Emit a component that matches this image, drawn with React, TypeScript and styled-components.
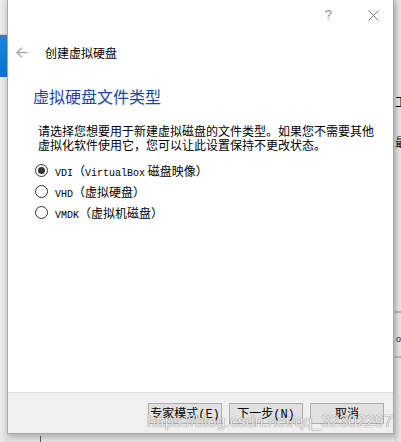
import React from 'react';
import styled, { createGlobalStyle } from 'styled-components';

const GlobalStyle = createGlobalStyle`
  html, body {
    margin: 0;
    padding: 0;
    background: #e4e4e4;
  }
`;

const CJK = `"Noto Sans CJK SC", "Liberation Sans", sans-serif`;
const MIXED = `"Liberation Mono", "Noto Sans CJK SC", monospace`;

const BackIcon = () => (
  <svg width="12" height="11" viewBox="0 0 12 11">
    <path d="M11.5 5.5H1M5.8 0.7L1 5.5l4.8 4.8" fill="none" stroke="#a8a8a8" strokeWidth="1.4" />
  </svg>
);

const CloseIcon = () => (
  <svg width="11" height="11" viewBox="0 0 11 11">
    <path d="M0.5 0.5l10 10M10.5 0.5l-10 10" fill="none" stroke="#7a7a7a" strokeWidth="1" />
  </svg>
);

type RadioOption = {
  code: string;
  note: string;
  checked?: boolean;
};

const options: RadioOption[] = [
  { code: 'VDI', note: 'VirtualBox 磁盘映像', checked: true },
  { code: 'VHD', note: '虚拟硬盘' },
  { code: 'VMDK', note: '虚拟机磁盘' },
];

const renderNote = (note: string) =>
  note.split(/([A-Za-z]+)/).map((part, i) =>
    /^[A-Za-z]+$/.test(part) ? <Latin key={i}>{part}</Latin> : <span key={i}>{part}</span>
  );

export default function App() {
  return (
    <>
      <GlobalStyle />
      <Screen>
        <LeftStrip>
          <TaskbarTab />
        </LeftStrip>

        <DialogColumn>
          <Dialog>
            <TitleBar>
              <HelpMark>?</HelpMark>
              <CloseButton>
                <CloseIcon />
              </CloseButton>
            </TitleBar>

            <WizardHeader>
              <BackButton>
                <BackIcon />
              </BackButton>
              <WizardTitle>创建虚拟硬盘</WizardTitle>
            </WizardHeader>

            <Body>
              <PageHeading>虚拟硬盘文件类型</PageHeading>
              <Description>
                请选择您想要用于新建虚拟磁盘的文件类型。如果您不需要其他
                <br />
                虚拟化软件使用它，您可以让此设置保持不更改状态。
              </Description>

              <RadioList>
                {options.map((opt) => (
                  <RadioRow key={opt.code}>
                    <RadioCircle $checked={!!opt.checked} />
                    <RadioLabel>
                      <Latin>{opt.code}</Latin>（{renderNote(opt.note)}）
                    </RadioLabel>
                  </RadioRow>
                ))}
              </RadioList>
            </Body>

            <Footer>
              <FooterButton>专家模式(E)</FooterButton>
              <FooterButton>下一步(N)</FooterButton>
              <FooterButton>取消</FooterButton>
            </Footer>
          </Dialog>

          <BelowDialog>
            <BackWindowEdge />
          </BelowDialog>
        </DialogColumn>

        <RightStrip>
          <BehindText $top={93}>工具</BehindText>
          <BehindText $top={133}>最</BehindText>
          <BehindRule $top={311} />
          <BehindDot>o</BehindDot>
          <BehindRule $top={356} />
        </RightStrip>

        <Watermark>https://blog.csdn.net/qq_32302297</Watermark>
      </Screen>
    </>
  );
}

const Screen = styled.div`
  position: relative;
  width: 401px;
  height: 442px;
  overflow: hidden;
  display: flex;
  background: #e4e4e4;
`;

const LeftStrip = styled.div`
  width: 7px;
  flex-shrink: 0;
  background: linear-gradient(to right, #ececec, #dcdcdc);
  padding-top: 34px;
  box-sizing: border-box;
`;

const TaskbarTab = styled.div`
  height: 42px;
  border-top: 1px solid #c9c9c9;
  background: linear-gradient(to bottom, #1a86e0, #0a73cc);
`;

const DialogColumn = styled.div`
  width: 387px;
  flex-shrink: 0;
  display: flex;
  flex-direction: column;
`;

const Dialog = styled.div`
  height: 434px;
  box-sizing: border-box;
  background: #ffffff;
  border: 1px solid #a9a9a9;
  border-top: none;
  display: flex;
  flex-direction: column;
  box-shadow: 2px 3px 6px rgba(0, 0, 0, 0.18);
  position: relative;
  z-index: 1;
`;

const TitleBar = styled.div`
  height: 30px;
  display: flex;
  align-items: center;
  justify-content: flex-end;
  padding-right: 14px;
  gap: 36px;
`;

const HelpMark = styled.span`
  font-family: "Liberation Sans", sans-serif;
  font-size: 13px;
  color: #8a8a8a;
  margin-top: -2px;
`;

const CloseButton = styled.span`
  display: flex;
  margin-top: 1px;
`;

const WizardHeader = styled.div`
  height: 22px;
  margin-top: 11px;
  display: flex;
  align-items: center;
  padding-left: 8px;
`;

const BackButton = styled.span`
  display: flex;
  width: 29px;
`;

const WizardTitle = styled.span`
  font-family: ${CJK};
  font-size: 12px;
  color: #000000;
`;

const Body = styled.div`
  flex: 1;
  padding-left: 25px;
`;

const PageHeading = styled.div`
  margin-top: 23px;
  font-family: ${CJK};
  font-size: 16px;
  line-height: 20px;
  color: #1c43a6;
`;

const Description = styled.div`
  margin-top: 18px;
  margin-left: 5px;
  font-family: ${CJK};
  font-size: 12px;
  line-height: 14px;
  color: #000000;
`;

const RadioList = styled.div`
  margin-top: 11px;
  margin-left: 2px;
  display: flex;
  flex-direction: column;
  gap: 7px;
`;

const RadioRow = styled.div`
  height: 14px;
  display: flex;
  align-items: center;
  gap: 7px;
`;

const RadioCircle = styled.span<{ $checked: boolean }>`
  width: 13px;
  height: 13px;
  box-sizing: border-box;
  border-radius: 50%;
  border: 1px solid #333333;
  background: #ffffff;
  display: flex;
  align-items: center;
  justify-content: center;

  &::after {
    content: '';
    width: 7px;
    height: 7px;
    border-radius: 50%;
    background: #333333;
    display: ${(p) => (p.$checked ? 'block' : 'none')};
  }
`;

const RadioLabel = styled.span`
  font-family: ${CJK};
  font-size: 12px;
  color: #000000;
  white-space: nowrap;
`;

const Latin = styled.span`
  font-family: "Liberation Mono", monospace;
  font-size: 10px;
`;

const Footer = styled.div`
  height: 40px;
  background: #f0f0f0;
  border-top: 1px solid #dcdcdc;
  display: flex;
  align-items: center;
  justify-content: flex-end;
  gap: 7px;
  padding-right: 9px;
`;

const FooterButton = styled.button`
  width: 74px;
  height: 21px;
  padding: 0;
  background: #e1e1e1;
  border: 1px solid #adadad;
  font-family: ${MIXED};
  font-size: 12px;
  color: #000000;
`;

const BelowDialog = styled.div`
  flex: 1;
  position: relative;
  background: linear-gradient(to bottom, #d4d4d4, #e6e6e6);
`;

const BackWindowEdge = styled.div`
  margin-left: 33px;
  margin-top: 2px;
  width: 1px;
  height: 100%;
  background: #5a5a5a;
`;

const RightStrip = styled.div`
  position: relative;
  flex: 1;
  overflow: hidden;
  background: linear-gradient(to right, #cfcfcf, #e2e2e2 4px, #e6e6e6);
`;

const BehindText = styled.div<{ $top: number }>`
  position: absolute;
  top: ${(p) => p.$top}px;
  left: 1px;
  font-family: ${CJK};
  font-size: 12px;
  color: #111111;
  white-space: nowrap;
`;

const BehindRule = styled.div<{ $top: number }>`
  position: absolute;
  top: ${(p) => p.$top}px;
  left: 0;
  right: 0;
  height: 2px;
  background: #b4b4b4;
`;

const BehindDot = styled.div`
  position: absolute;
  top: 334px;
  left: 2px;
  font-family: "Liberation Sans", sans-serif;
  font-size: 9px;
  color: #222222;
`;

const Watermark = styled.div`
  position: absolute;
  left: 147px;
  top: 413px;
  z-index: 2;
  font-family: "Liberation Sans", sans-serif;
  font-size: 16px;
  color: rgba(255, 255, 255, 0.85);
  text-shadow:
    0 0 1px rgba(110, 110, 110, 0.7),
    0 0 1px rgba(110, 110, 110, 0.7);
  white-space: nowrap;
  pointer-events: none;
`;
